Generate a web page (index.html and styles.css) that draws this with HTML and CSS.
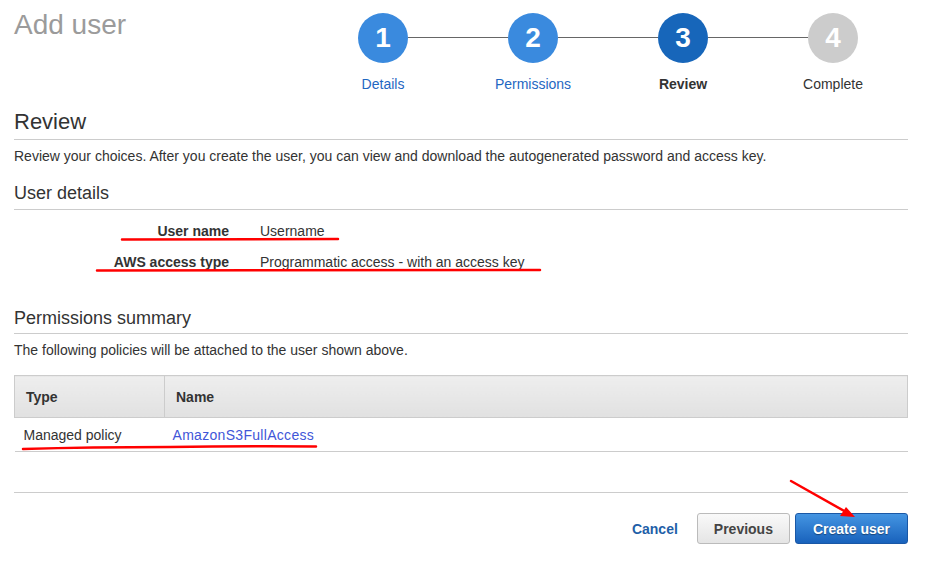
FILE: index.html
```html
<!DOCTYPE html>
<html lang="en">
<head>
    <meta charset="UTF-8">
    <title>Add user</title>
    <link rel="stylesheet" href="styles.css">
</head>
<body>
    <div class="page">
        <div class="header">
            <h1 class="title">Add user</h1>
            <div class="steps">
                <div class="step done">
                    <div class="circle">1</div>
                    <div class="step-label">Details</div>
                </div>
                <div class="step done">
                    <div class="circle">2</div>
                    <div class="step-label">Permissions</div>
                </div>
                <div class="step current">
                    <div class="circle">3</div>
                    <div class="step-label">Review</div>
                </div>
                <div class="step todo">
                    <div class="circle">4</div>
                    <div class="step-label">Complete</div>
                </div>
            </div>
        </div>

        <h2 class="section-title">Review</h2>
        <p class="note">Review your choices. After you create the user, you can view and download the autogenerated password and access key.</p>

        <h3 class="sub-title">User details</h3>
        <div class="details">
            <div class="key">User name</div>
            <div class="value">Username</div>
            <div class="key">AWS access type</div>
            <div class="value">Programmatic access - with an access key</div>
        </div>

        <h3 class="sub-title perms">Permissions summary</h3>
        <p class="note">The following policies will be attached to the user shown above.</p>

        <table class="policies">
            <thead>
                <tr>
                    <th class="col-type">Type</th>
                    <th>Name</th>
                </tr>
            </thead>
            <tbody>
                <tr>
                    <td>Managed policy</td>
                    <td><a href="#">AmazonS3FullAccess</a></td>
                </tr>
            </tbody>
        </table>

        <div class="actions">
            <a href="#" class="cancel">Cancel</a>
            <button class="btn">Previous</button>
            <button class="btn primary">Create user</button>
        </div>

        <!-- hand drawn markup on top of the screenshot -->
        <svg class="marks" width="932" height="570" viewBox="0 0 932 570">
            <g stroke="#f00" stroke-width="2.5" fill="none" stroke-linecap="round">
                <path d="M122 239.5 L338 239"/>
                <path d="M97 270.5 L540 270"/>
                <path d="M23 449 Q90 447 170 447 Q240 446 316 446.5"/>
                <path d="M791 481 L846 512"/>
            </g>
            <path d="M855 517 L840 516 L846 507 Z" fill="#f00"/>
        </svg>
    </div>
</body>
</html>
```

FILE: styles.css
```css
:root {
    --text-color: #333;
    --line-color: #ccc;
    --step-blue: #3a8ade;
    --step-dark: #1766ba;
    --link-color: #1f67c2;
}
body {
    margin: 0;
    padding: 0;
    font-family: 'Liberation Sans', Arial, sans-serif;
    color: var(--text-color);
    background: #fff;
}
.page {
    position: relative;
    width: 894px;
    height: 570px;
    padding: 0 24px 0 14px;
}
.header {
    display: flex;
    height: 100px;
}
.title {
    margin: 9px 0 0;
    font-size: 28px;
    line-height: 32px;
    font-weight: normal;
    color: #9b9b9b;
}
.steps {
    display: flex;
    margin-left: auto;
    padding-top: 13px;
}
.step {
    position: relative;
    width: 150px;
    display: flex;
    flex-direction: column;
    align-items: center;
}
.step + .step::before {
    content: '';
    position: absolute;
    top: 24px;
    left: -50px;
    width: 100px;
    height: 1px;
    background: #666;
}
.circle {
    width: 50px;
    height: 50px;
    border-radius: 50%;
    color: #fff;
    font-size: 28px;
    font-weight: bold;
    line-height: 50px;
    text-align: center;
    background: var(--step-blue);
}
.step.current .circle { background: var(--step-dark); }
.step.todo .circle { background: #ccc; }
.step-label {
    margin-top: 13px;
    font-size: 14px;
    line-height: 16px;
    color: var(--link-color);
}
.step.current .step-label { color: #333; font-weight: bold; }
.step.todo .step-label { color: #333; }

.section-title {
    margin: 9px 0 0;
    padding-bottom: 4px;
    font-size: 22px;
    line-height: 26px;
    font-weight: normal;
    border-bottom: 1px solid var(--line-color);
}
.note {
    margin: 8px 0 0;
    font-size: 14px;
    line-height: 16px;
}
.sub-title {
    margin: 18px 0 0;
    padding-bottom: 5px;
    font-size: 18px;
    line-height: 22px;
    font-weight: normal;
    border-bottom: 1px solid var(--line-color);
}
.sub-title.perms {
    margin-top: 36px;
    padding-bottom: 4px;
}
.details {
    display: grid;
    grid-template-columns: 215px auto;
    column-gap: 31px;
    row-gap: 14px;
    margin-top: 13px;
    font-size: 14px;
    line-height: 17px;
}
.key {
    text-align: right;
    font-weight: bold;
}
.policies {
    width: 100%;
    margin-top: 17px;
    border-collapse: collapse;
    font-size: 14px;
}
.policies th {
    height: 41px;
    padding: 0 11px;
    text-align: left;
    font-size: 14px;
    background: linear-gradient(#eee, #e1e1e1);
    border: 1px solid var(--line-color);
}
.policies th.col-type { width: 127px; }
.policies td {
    height: 33px;
    padding: 0 9px;
    border-bottom: 1px solid var(--line-color);
}
.policies td + td { padding-left: 8px; }
.policies a {
    color: #4156d8;
    text-decoration: none;
    letter-spacing: 0.3px;
}
.actions {
    display: flex;
    justify-content: flex-end;
    align-items: center;
    margin-top: 40px;
    padding-top: 20px;
    border-top: 1px solid var(--line-color);
}
.cancel {
    margin-right: 19px;
    font-size: 14px;
    font-weight: bold;
    color: #1f5fa8;
    text-decoration: none;
}
.btn {
    height: 31px;
    padding: 0 16px;
    font-family: inherit;
    font-size: 14px;
    font-weight: bold;
    color: #444;
    border: 1px solid #bbb;
    border-radius: 3px;
    background: linear-gradient(#f9f9f9, #e5e5e5);
    cursor: pointer;
}
.btn.primary {
    margin-left: 5px;
    padding: 0 17px;
    color: #fff;
    text-shadow: 0 1px 1px rgba(0, 0, 0, 0.4);
    border-color: #1a58a6;
    background: linear-gradient(#4495e2, #1962bc);
}
.marks {
    position: absolute;
    top: 0;
    left: 0;
    pointer-events: none;
}
```
